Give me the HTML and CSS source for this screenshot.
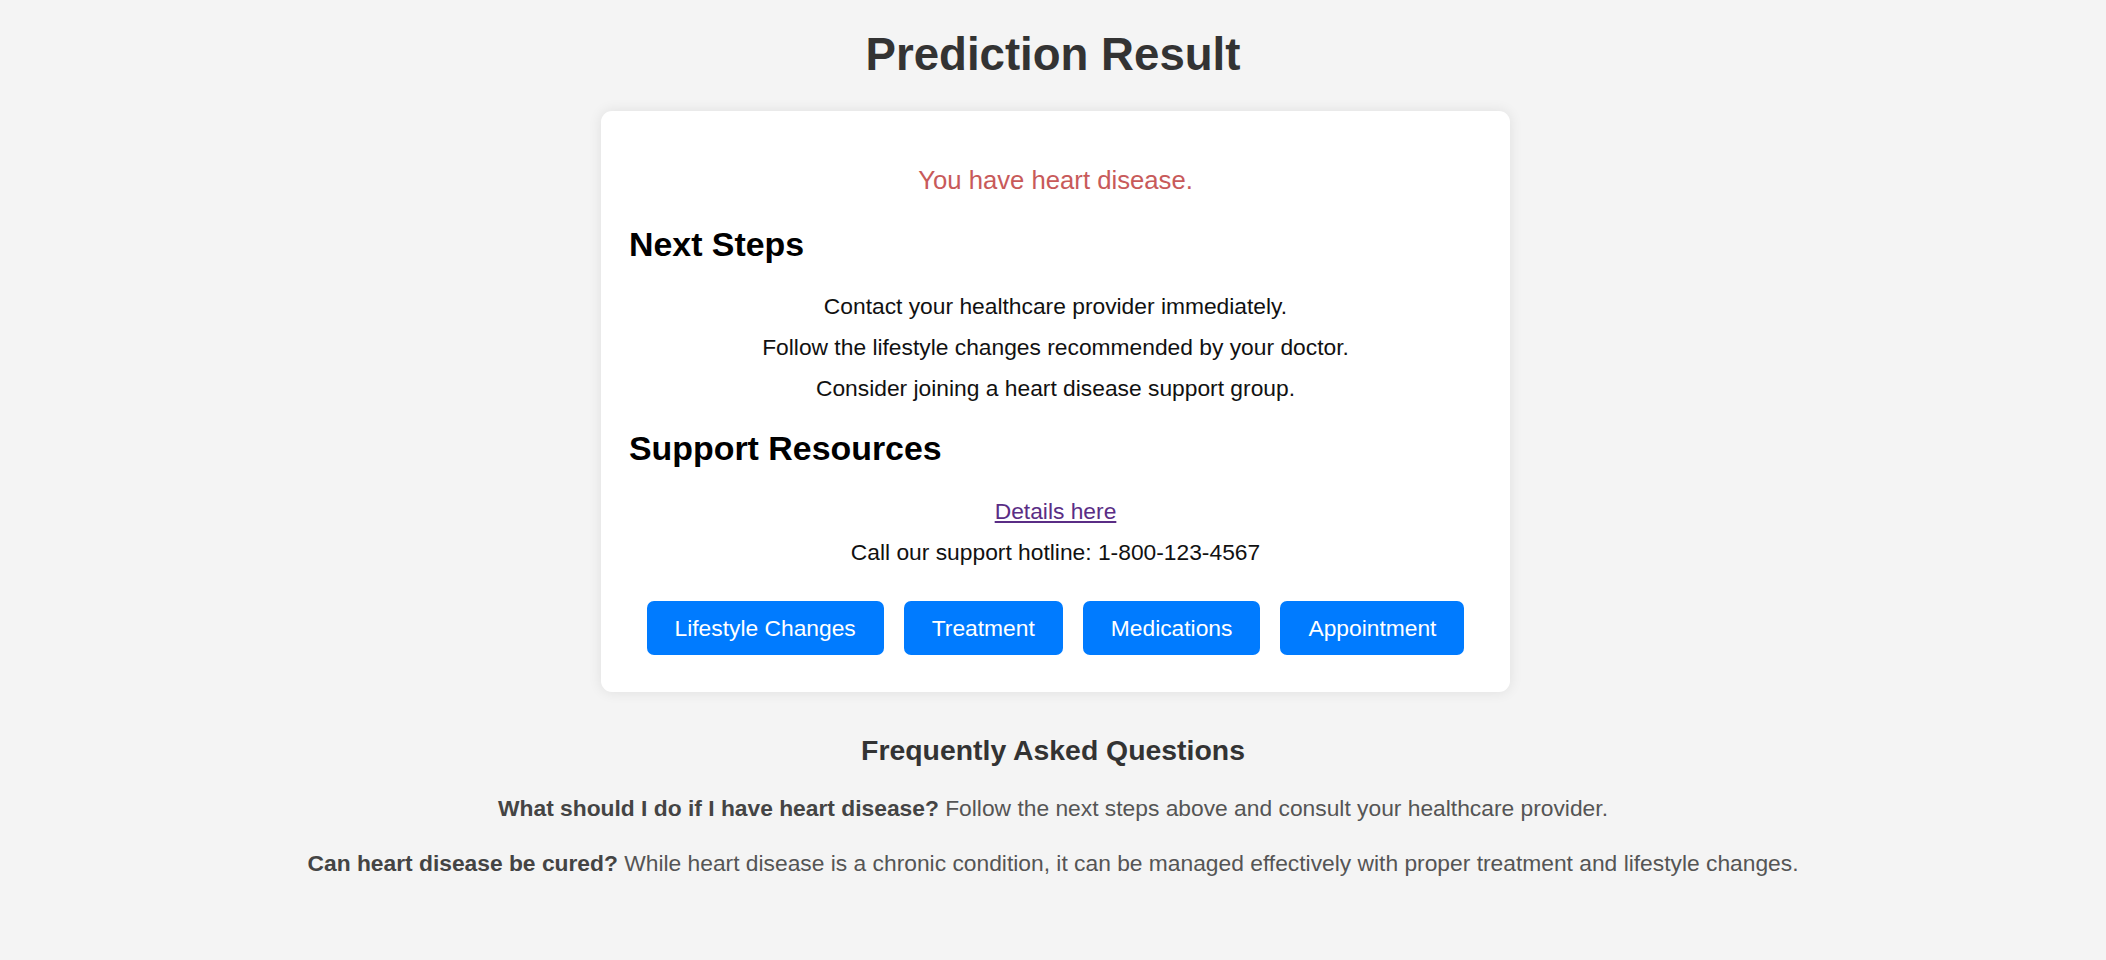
FILE: index.html
```html
<!DOCTYPE html>
<html lang="en">
<head>
<meta charset="utf-8">
<title>Prediction Result</title>
<link rel="stylesheet" href="styles.css">
</head>
<body>
<h1 class="title">Prediction Result</h1>
<div class="card">
  <p class="result">You have heart disease.</p>
  <h2 class="section">Next Steps</h2>
  <p class="line">Contact your healthcare provider immediately.</p>
  <p class="line gap">Follow the lifestyle changes recommended by your doctor.</p>
  <p class="line gap">Consider joining a heart disease support group.</p>
  <h2 class="section section-2">Support Resources</h2>
  <p class="line link-line"><a class="link" href="#">Details here</a></p>
  <p class="line gap">Call our support hotline: 1-800-123-4567</p>
  <div class="buttons">
    <button class="btn">Lifestyle Changes</button>
    <button class="btn">Treatment</button>
    <button class="btn">Medications</button>
    <button class="btn">Appointment</button>
  </div>
</div>
<div class="faq">
  <h3 class="faq-title">Frequently Asked Questions</h3>
  <p class="faq-item"><strong>What should I do if I have heart disease?</strong> Follow the next steps above and consult your healthcare provider.</p>
  <p class="faq-item"><strong>Can heart disease be cured?</strong> While heart disease is a chronic condition, it can be managed effectively with proper treatment and lifestyle changes.</p>
</div>
</body>
</html>
```

FILE: styles.css
```css
html, body {
  margin: 0;
  padding: 0;
}
body {
  background: #f4f4f4;
  font-family: "Liberation Sans", Arial, sans-serif;
  color: #111;
  font-size: 22.8px;
}
.title {
  margin: 29px 0 0;
  font-size: 45.6px;
  line-height: 52px;
  text-align: center;
  color: #333;
  font-weight: bold;
}
.card {
  width: 909px;
  box-sizing: border-box;
  margin: 30px 0 0 calc(50% - 452px);
  background: #fff;
  border-radius: 11px;
  box-shadow: 0 0 14px rgba(0, 0, 0, 0.09);
  padding: 28px 28px 37px;
}
.result {
  margin: 26px 0 0;
  font-size: 25.7px;
  line-height: 30px;
  text-align: center;
  color: #c85a5a;
}
.section {
  margin: 30px 0 0;
  font-size: 33.9px;
  line-height: 38px;
  font-weight: bold;
  color: #000;
}
.section-2 {
  margin-top: 28px;
}
.line {
  margin: 30px 0 0;
  line-height: 26px;
  text-align: center;
  color: #111;
}
.line.gap {
  margin-top: 15px;
}
.line.link-line {
  margin-top: 31px;
}
.link {
  color: #5a2d85;
}
.buttons {
  margin-top: 36px;
  display: flex;
  justify-content: center;
  gap: 20px;
}
.btn {
  font-family: "Liberation Sans", Arial, sans-serif;
  font-size: 22.8px;
  line-height: 26px;
  padding: 14px 28px;
  border: none;
  border-radius: 7px;
  background: #007bff;
  color: #fff;
}
.faq {
  text-align: center;
  margin-top: 42px;
}
.faq-title {
  margin: 0;
  font-size: 28.4px;
  line-height: 32px;
  color: #333;
}
.faq-item {
  margin: 29px 0 0;
  line-height: 26px;
  color: #555;
}
.faq-item strong {
  color: #444;
}
```
